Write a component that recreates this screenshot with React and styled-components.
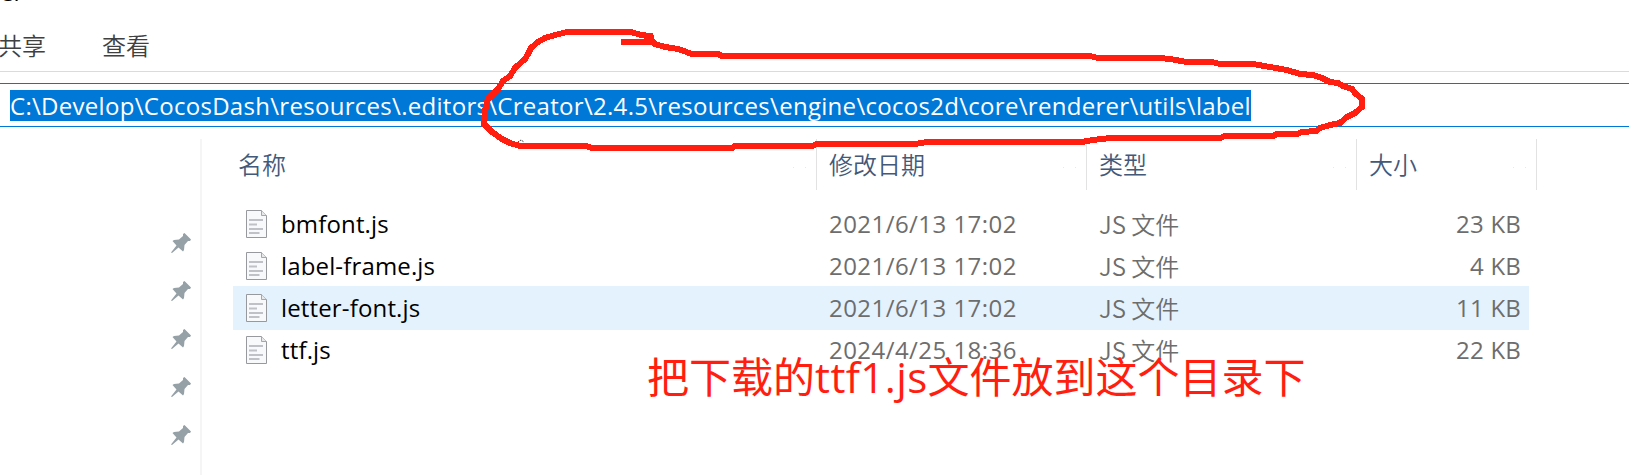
import React from 'react';
import styled, { createGlobalStyle } from 'styled-components';

const Global = createGlobalStyle`
  * { box-sizing: border-box; }
  html, body { margin: 0; background: #fff; }
  body {
    overflow: hidden;
    font: 400 24px/42px "Open Sans", "Noto Sans CJK SC", sans-serif;
    white-space: nowrap;
  }
`;

const Window = styled.main`
  position: relative;
  display: flex;
  flex-direction: column;
  width: 1629px;
  height: 475px;
  overflow: hidden;
`;

const TitleBar = styled.div`
  display: flex;
  align-items: flex-end;
  height: 4px;
  margin-bottom: 2px;
  overflow: hidden;
  color: #000;
  line-height: 24px;
`;

const Ribbon = styled.nav`
  display: flex;
  align-items: center;
  gap: 56px;
  height: 66px;
  padding-top: 13px;
  margin-left: -2px;
  border-bottom: 1px solid #dadbdc;
  color: #404040;
`;

const Han = styled.span`
  font-family: "Noto Sans CJK SC", sans-serif;
  font-weight: 350;
  letter-spacing: 0;
`;

const AddressBar = styled.div`
  display: flex;
  align-items: center;
  height: 44px;
  margin-top: 11px;
  padding-left: 10px;
  border: solid #0078d7;
  border-width: 1px 0;
`;

const Selection = styled.span`
  width: 1241px;
  height: 31px;
  background: #0078d7;
  color: #fff;
  line-height: 31px;
  letter-spacing: 0.292px;
  overflow: hidden;
`;

const Body = styled.div`
  display: flex;
  flex: 1;
  margin-top: 12px;
`;

const Sidebar = styled.aside`
  display: flex;
  flex-direction: column;
  align-items: flex-end;
  gap: 28px;
  width: 202px;
  padding: 94px 11px 0 0;
  border-right: 2px solid #f5f5f5;
`;

const PinSvg = styled.svg`
  display: block;
  width: 20px;
  height: 20px;
  margin-right: -2px;
  flex: none;
  fill: #95a0a7;
`;

const Listing = styled.section`
  display: flex;
  flex-direction: column;
  width: 1335px;
`;

const HeaderRow = styled.div`
  display: grid;
  grid-template-columns: 615px 270px 270px 180px;
  height: 51px;
  margin-bottom: 12px;
`;

const HeaderCell = styled.div`
  display: flex;
  align-items: center;
  position: relative;
  padding: 0 0 1px ${(p) => (p.$first ? 36 : 12)}px;
  border-right: 1px solid #e2e2e2;
  color: #42597a;

  &::after {
    content: "";
    position: absolute;
    right: 22px;
    top: 28px;
    width: 1px;
    height: 1px;
    background: #e8e8e8;
    box-shadow: 12px 0 #e8e8e8;
  }
`;

const FileRow = styled.div`
  display: grid;
  grid-template-columns: 583px 270px 270px 173px;
  align-items: center;
  width: 1296px;
  height: 44px;
  margin: 0 0 -2px 31px;
  padding-bottom: 1px;
  line-height: 41px;
  background: ${(p) => (p.$hover ? '#e4f2fe' : 'transparent')};
`;

const NameCell = styled.div`
  display: flex;
  align-items: center;
  gap: 14px;
  padding-left: 13px;
  color: #000;
  letter-spacing: 0.15px;
`;

const MetaCell = styled.div`
  padding: ${(p) => (p.$end ? '0 8px 0 0' : '0 0 0 13px')};
  text-align: ${(p) => (p.$end ? 'right' : 'left')};
  letter-spacing: ${(p) => p.$spacing || 0}px;
  color: #6d6d6d;
`;

const TypeCell = styled(MetaCell)`
  font-family: "Noto Sans CJK SC", sans-serif;
  font-weight: 350;
  line-height: 40px;
`;

const DocSvg = styled.svg`
  display: block;
  width: 21px;
  height: 28px;
  flex: none;
`;

const Note = styled.div`
  position: absolute;
  left: 647px;
  top: 345px;
  color: #ff1e10;
  font-size: 42px;
  line-height: 60px;
  letter-spacing: 0.4px;
`;

const NoteHan = styled(Han)`
  font-weight: 400;
`;

const Scribble = styled.svg`
  position: absolute;
  inset: 0;
  width: 1629px;
  height: 475px;
  pointer-events: none;
`;

const Pin = () => (
  <PinSvg viewBox="0 0 20 20">
    <path d="M13.5 0L20 6.5L19 8H17L13.5 12L13 17L12 18.5L7.5 14.5L1 20L0 19.5L5.5 12.5L1.5 8L3 7L8 6.5L12 3V1Z" />
  </PinSvg>
);

const Doc = () => (
  <DocSvg viewBox="0 0 21 28">
    <path d="M.5 .5H15.5L20.5 5.5V27.5H.5Z" fill="#f8f9fb" stroke="#97999c" />
    <path d="M15.5 .5V5.5H20.5" fill="#e6e8ea" stroke="#a5a7aa" />
    <path d="M3 10H17M3 14.5H11M3 19H17M3 23H13.5" stroke="#c0c1c6" strokeWidth="1.8" />
  </DocSvg>
);

const files = [
  { name: 'bmfont.js', date: '2021/6/13 17:02', size: '23 KB' },
  { name: 'label-frame.js', date: '2021/6/13 17:02', size: '4 KB' },
  { name: 'letter-font.js', date: '2021/6/13 17:02', size: '11 KB', hover: true },
  { name: 'ttf.js', date: '2024/4/25 18:36', size: '22 KB' },
];

const loop =
  '624,42 652,42 651,36 641,35 631,32 567,32 555,35 545,38 538,42 531,48 528,54 525,59 515,68 510,76 503,81 498,89 488,99 485,110 484,124 492,132 502,139 510,143 520,146 586,146 592,148 732,148 735,146 812,146 817,144 915,144 927,142 1082,142 1093,140 1110,138 1220,138 1225,136 1273,136 1277,134 1297,134 1302,132 1316,131 1320,128 1330,125 1340,123 1347,117 1355,113 1362,107 1362,99 1355,93 1352,89 1343,86 1338,83 1330,82 1322,78 1313,75 1300,74 1287,70 1270,67 1253,64 1220,64 1212,62 1187,62 1170,59 1160,58 1098,58 1090,56 722,56 718,54 692,54 678,49 665,47 655,44 648,38';

export default function App() {
  return (
    <Window>
      <Global />
      <TitleBar>er</TitleBar>
      <Ribbon>
        <Han>共享</Han>
        <Han>查看</Han>
      </Ribbon>
      <AddressBar>
        <Selection>
          {'C:\\Develop\\CocosDash\\resources\\.editors\\Creator\\2.4.5\\resources\\engine\\cocos2d\\core\\renderer\\utils\\label'}
        </Selection>
      </AddressBar>
      <Body>
        <Sidebar>
          {[0, 1, 2, 3, 4].map((n) => (
            <Pin key={n} />
          ))}
        </Sidebar>
        <Listing>
          <HeaderRow>
            <HeaderCell $first><Han>名称</Han></HeaderCell>
            <HeaderCell><Han>修改日期</Han></HeaderCell>
            <HeaderCell><Han>类型</Han></HeaderCell>
            <HeaderCell><Han>大小</Han></HeaderCell>
          </HeaderRow>
          {files.map((f) => (
            <FileRow key={f.name} $hover={f.hover}>
              <NameCell><Doc />{f.name}</NameCell>
              <MetaCell $spacing={0.45}>{f.date}</MetaCell>
              <TypeCell>JS 文件</TypeCell>
              <MetaCell $end $spacing={0.2}>{f.size}</MetaCell>
            </FileRow>
          ))}
        </Listing>
      </Body>
      <Note>
        <NoteHan>把下载的</NoteHan>ttf1.js<NoteHan>文件放到这个目录下</NoteHan>
      </Note>
      <Scribble viewBox="0 0 1629 475">
        <path d="M518 142L521 140L524 142" fill="none" stroke="#333" strokeDasharray="1.5 1" />
        <polyline points={loop} fill="none" stroke="#ff1e10" strokeWidth="6" strokeLinejoin="round" strokeLinecap="square" shapeRendering="crispEdges" />
      </Scribble>
    </Window>
  );
}
